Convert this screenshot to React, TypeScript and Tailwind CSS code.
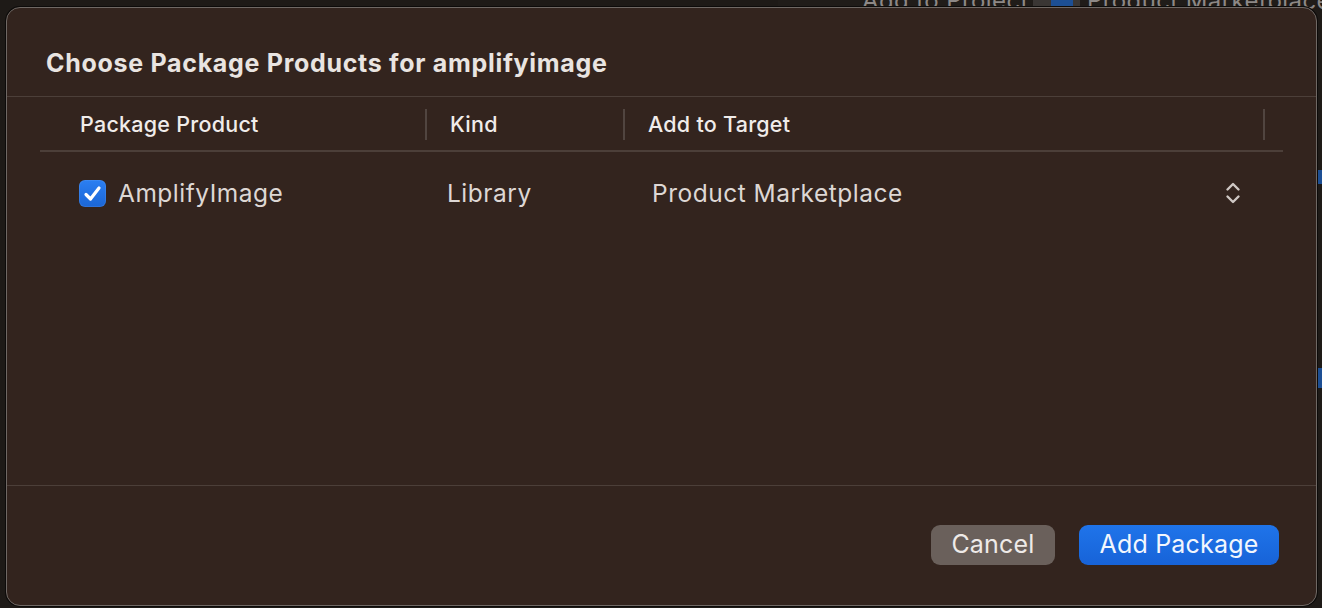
import React from "react";

const Chevrons: React.FC = () => (
  <svg width="16" height="24" viewBox="0 0 16 24" fill="none">
    <path d="M2.5 8.5 L8 3 L13.5 8.5" stroke="#cfc8c4" strokeWidth="2.4" strokeLinecap="round" strokeLinejoin="round" />
    <path d="M2.5 15.5 L8 21 L13.5 15.5" stroke="#cfc8c4" strokeWidth="2.4" strokeLinecap="round" strokeLinejoin="round" />
  </svg>
);

const Checkbox: React.FC = () => (
  <div className="w-[27px] h-[27px] rounded-[6px] bg-gradient-to-b from-[#2b7ff2] to-[#1b66d6] flex items-center justify-center shadow-[inset_0_0_0_1px_rgba(255,255,255,0.08)]">
    <svg width="19" height="17" viewBox="0 0 19 17" fill="none">
      <path d="M3 9.5 L7.5 14 L16 3" stroke="#ffffff" strokeWidth="3.2" strokeLinecap="round" strokeLinejoin="round" />
    </svg>
  </div>
);

export default function App() {
  return (
    <div
      className="relative w-[1322px] h-[608px] overflow-hidden bg-[#1e1a17]"
      style={{ fontFamily: "Inter, 'Noto Sans', sans-serif" }}
    >
      {/* window behind the sheet */}
      <div className="absolute top-0 left-[778px] w-[544px] h-[8px] bg-[#201c19]" />
      <div className="absolute top-0 left-[1033px] w-[47px] h-[8px] bg-[#3a3634]" />
      <div className="absolute top-0 left-[1051px] w-[22px] h-[8px] bg-[#1d4f94]" />
      <div className="absolute top-[-17px] left-[862px] text-[24px] tracking-[0.4px] text-[#8d8886] whitespace-nowrap">
        Add to Project
      </div>
      <div className="absolute top-[-17px] left-[1087px] text-[24px] tracking-[0.4px] text-[#8d8886] whitespace-nowrap">
        Product Marketplace
      </div>
      <div className="absolute right-0 top-[170px] w-[5px] h-[14px] bg-[#1d4f94]" />
      <div className="absolute right-0 top-[368px] w-[5px] h-[20px] bg-[#1d4f94]" />

      {/* sheet */}
      <div className="absolute left-[6px] top-[7px] w-[1311px] h-[599px] rounded-[14px] bg-[#33241e] border border-[#6f6864] shadow-[0_0_0_1px_#0d0b0a] flex flex-col overflow-hidden">
        <div className="h-[88px] px-[39px] pt-[40px]">
          <h1 className="text-[25px] leading-[30px] font-bold text-[#e9e4e1] tracking-[0.7px]">
            Choose Package Products for amplifyimage
          </h1>
        </div>
        <div className="h-px bg-[#4c3f39]" />

        <div className="flex-1 px-[33px]">
          <div className="grid grid-cols-[385px_198px_640px_21px] h-[55px] pt-[2px] items-center border-b-2 border-[#4c3f39]">
            <div className="pl-[40px] text-[21.5px] tracking-[0.25px] font-medium text-[#f0ecea]">Package Product</div>
            <div className="h-[31px] border-l-2 border-[#514540] pl-[23px] flex items-center text-[21.5px] tracking-[0.25px] font-medium text-[#f0ecea]">
              Kind
            </div>
            <div className="h-[31px] border-l-2 border-[#514540] pl-[23px] flex items-center text-[21.5px] tracking-[0.25px] font-medium text-[#f0ecea]">
              Add to Target
            </div>
            <div className="h-[31px] border-l-2 border-[#514540]" />
          </div>

          <div className="grid grid-cols-[385px_198px_640px_21px] h-[82px] items-center">
            <div className="pl-[39px] flex items-center gap-[12px]">
              <Checkbox />
              <span className="text-[24.5px] tracking-[0.5px] text-[#ddd7d4]">AmplifyImage</span>
            </div>
            <div className="pl-[22px] text-[24.5px] tracking-[0.5px] text-[#ddd7d4]">Library</div>
            <div className="pl-[29px] pr-[22px] flex items-center justify-between">
              <span className="text-[24.5px] tracking-[0.5px] text-[#ddd7d4]">Product Marketplace</span>
              <Chevrons />
            </div>
            <div />
          </div>
        </div>

        <div className="h-px bg-[#4c3f39]" />
        <div className="h-[119px] flex items-center justify-end gap-[24px] pr-[37px] pb-[2px]">
          <button className="w-[124px] h-[40px] rounded-[9px] bg-[#6a605b] text-[25px] tracking-[0.2px] text-[#eeeae8] leading-none">
            Cancel
          </button>
          <button className="w-[200px] h-[40px] rounded-[9px] bg-gradient-to-b from-[#1f74ea] to-[#1763d8] text-[25px] tracking-[0.2px] text-[#f2f6fd] leading-none">
            Add Package
          </button>
        </div>
      </div>
    </div>
  );
}
